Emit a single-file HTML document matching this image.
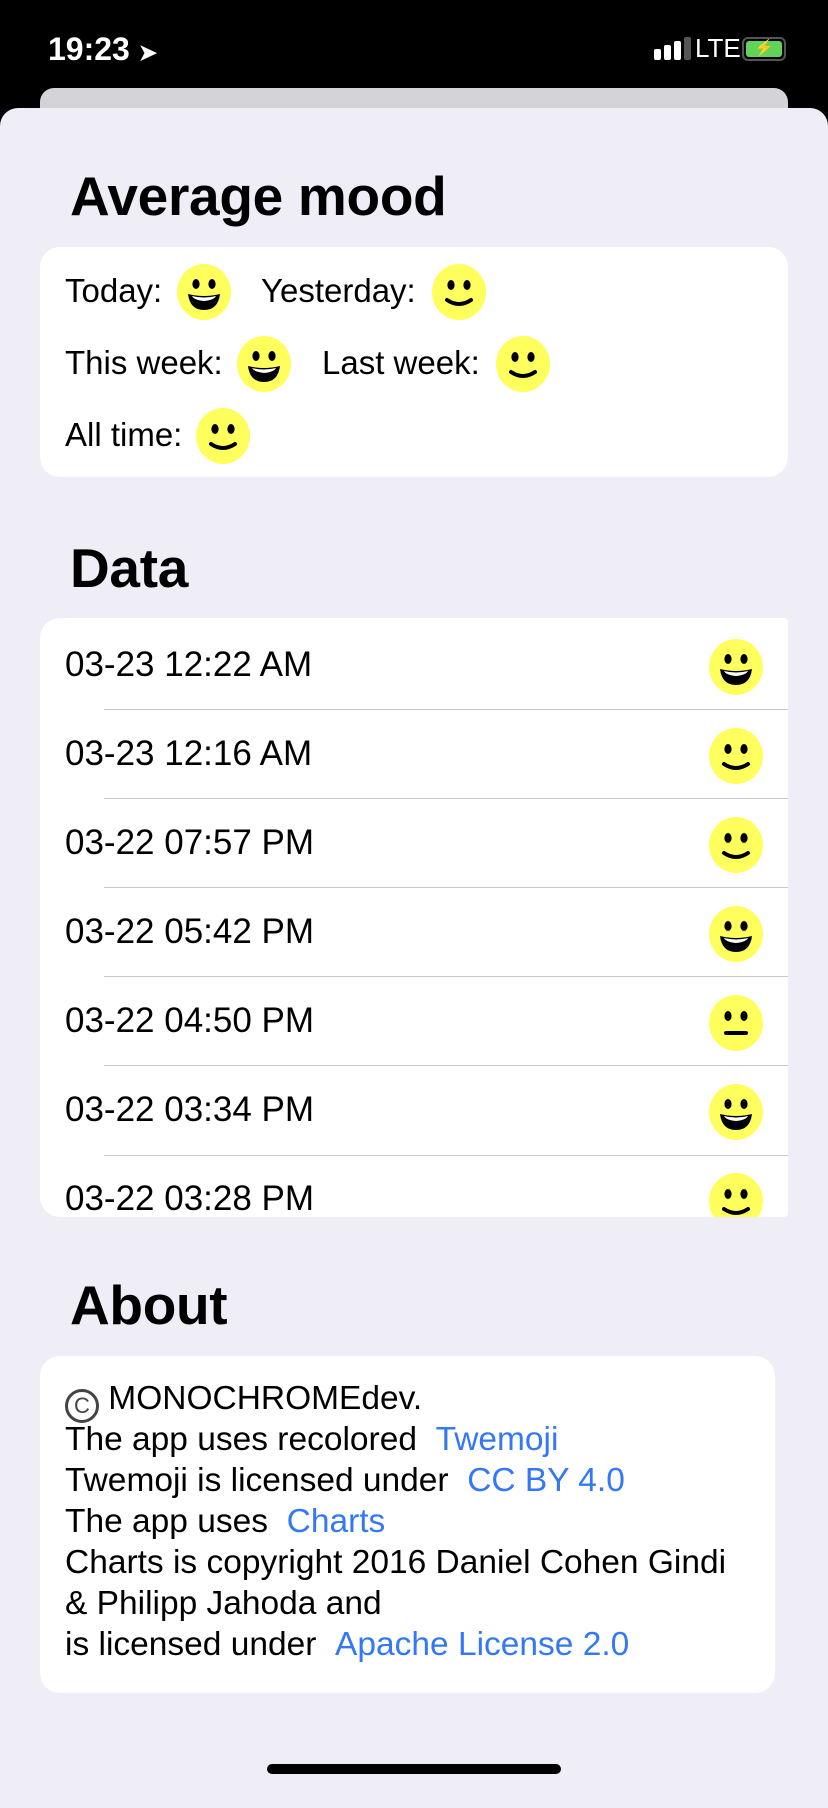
<!DOCTYPE html>
<html><head><meta charset="utf-8">
<style>
*{margin:0;padding:0;box-sizing:border-box}
body{width:828px;height:1792px;background:#000;position:relative;overflow:hidden;font-family:"Liberation Sans",sans-serif;color:#000}
.abs{position:absolute}
.sheet{left:0;top:108px;width:828px;height:1700px;background:#efeef6;border-radius:18px 18px 0 0}
.back{left:40px;top:88px;width:748px;height:40px;background:#d3d3d8;border-radius:14px}
.title{font-weight:bold;font-size:55px;left:70px;letter-spacing:-0.3px}
.card{background:#fff;border-radius:20px}
.t{font-size:33px;position:absolute;white-space:nowrap}
.d{font-size:35px;position:absolute;white-space:nowrap}
.e{position:absolute;width:54px;height:56px}
.sep{position:absolute;left:104px;width:684px;height:1px;background:#c8c8cc}
.blue{color:#3478f6}
.about div{font-size:33.5px;height:41px;line-height:41px;white-space:nowrap}
</style></head><body>
<svg width="0" height="0" style="position:absolute">
<defs>
<symbol id="grin" viewBox="0 0 54 56"><ellipse cx="27" cy="28" rx="27" ry="28" fill="#fefe5c"/><ellipse cx="19" cy="20" rx="3.6" ry="5" fill="#000"/><ellipse cx="35" cy="20" rx="3.6" ry="5" fill="#000"/><path d="M11 30 Q27 34 43 30 Q41 46 27 46 Q13 46 11 30Z" fill="#000"/><path d="M15 32 Q27 35 39 32 Q37 36 27 37 Q17 36 15 32Z" fill="#fff"/></symbol>
<symbol id="smile" viewBox="0 0 54 56"><ellipse cx="27" cy="28" rx="27" ry="28" fill="#fefe5c"/><ellipse cx="19" cy="21" rx="3.6" ry="5" fill="#000"/><ellipse cx="35" cy="21" rx="3.6" ry="5" fill="#000"/><path d="M15 36 Q27 44 39 36" stroke="#000" stroke-width="4" fill="none" stroke-linecap="round"/></symbol>
<symbol id="neutral" viewBox="0 0 54 56"><ellipse cx="27" cy="28" rx="27" ry="28" fill="#fefe5c"/><ellipse cx="19" cy="21" rx="3.6" ry="5" fill="#000"/><ellipse cx="35" cy="21" rx="3.6" ry="5" fill="#000"/><path d="M17 38 H37" stroke="#000" stroke-width="4" stroke-linecap="round"/></symbol>
</defs></svg>

<div class="abs" style="left:48px;top:31px;color:#fff;font-size:32px;font-weight:bold">19:23 <span style="font-size:22px">➤</span></div>
<div class="abs" style="left:654px;top:49px;width:7px;height:11px;background:#fff;border-radius:2px"></div>
<div class="abs" style="left:664px;top:45px;width:7px;height:15px;background:#fff;border-radius:2px"></div>
<div class="abs" style="left:674px;top:41px;width:7px;height:19px;background:#fff;border-radius:2px"></div>
<div class="abs" style="left:684px;top:37px;width:7px;height:23px;background:#555;border-radius:2px"></div>
<div class="abs" style="left:695px;top:33px;color:#fff;font-size:26px">LTE</div>
<div class="abs" style="left:742px;top:37px;width:44px;height:24px;border:2px solid #555;border-radius:6px;padding:2px"><div style="background:#5fd35a;width:100%;height:100%;border-radius:3px;color:#000;font-size:16px;text-align:center;line-height:16px">⚡</div></div>

<div class="abs back"></div>
<div class="abs sheet"></div>

<div class="abs title" style="top:164px">Average mood</div>
<div class="abs card" style="left:40px;top:247px;width:748px;height:230px"></div>
<div class="t" style="left:65px;top:272px">Today:</div><svg class="e" style="left:177px;top:264px"><use href="#grin"/></svg>
<div class="t" style="left:261px;top:272px">Yesterday:</div><svg class="e" style="left:432px;top:264px"><use href="#smile"/></svg>
<div class="t" style="left:65px;top:344px">This week:</div><svg class="e" style="left:237px;top:336px"><use href="#grin"/></svg>
<div class="t" style="left:322px;top:344px">Last week:</div><svg class="e" style="left:496px;top:336px"><use href="#smile"/></svg>
<div class="t" style="left:65px;top:416px">All time:</div><svg class="e" style="left:196px;top:408px"><use href="#smile"/></svg>

<div class="abs title" style="top:536px">Data</div>
<div class="abs card" style="left:40px;top:618px;width:748px;height:599px;border-radius:20px 4px 4px 20px"></div>
<div class="abs" style="left:40px;top:618px;width:748px;height:599px;overflow:hidden">
<div class="d" style="left:25px;top:27px">03-23 12:22 AM</div><svg class="e" style="left:669px;top:21px"><use href="#grin"/></svg>
<div class="sep" style="left:64px;top:91px"></div>
<div class="d" style="left:25px;top:116px">03-23 12:16 AM</div><svg class="e" style="left:669px;top:110px"><use href="#smile"/></svg>
<div class="sep" style="left:64px;top:180px"></div>
<div class="d" style="left:25px;top:205px">03-22 07:57 PM</div><svg class="e" style="left:669px;top:199px"><use href="#smile"/></svg>
<div class="sep" style="left:64px;top:269px"></div>
<div class="d" style="left:25px;top:294px">03-22 05:42 PM</div><svg class="e" style="left:669px;top:288px"><use href="#grin"/></svg>
<div class="sep" style="left:64px;top:358px"></div>
<div class="d" style="left:25px;top:383px">03-22 04:50 PM</div><svg class="e" style="left:669px;top:377px"><use href="#neutral"/></svg>
<div class="sep" style="left:64px;top:447px"></div>
<div class="d" style="left:25px;top:472px">03-22 03:34 PM</div><svg class="e" style="left:669px;top:466px"><use href="#grin"/></svg>
<div class="sep" style="left:64px;top:537px"></div>
<div class="d" style="left:25px;top:561px">03-22 03:28 PM</div><svg class="e" style="left:669px;top:555px"><use href="#smile"/></svg>
</div>

<div class="abs title" style="top:1273px">About</div>
<div class="abs card about" style="left:40px;top:1356px;width:735px;height:337px;padding:22px 0 0 25px">
<div><span style="display:inline-block;width:34px;height:34px;border:3px solid #444;border-radius:50%;font-size:22px;line-height:28px;text-align:center;vertical-align:-4px;color:#444">C</span> MONOCHROMEdev.</div>
<div>The app uses recolored &nbsp;<span class="blue">Twemoji</span></div>
<div>Twemoji is licensed under &nbsp;<span class="blue">CC BY 4.0</span></div>
<div>The app uses &nbsp;<span class="blue">Charts</span></div>
<div>Charts is copyright 2016 Daniel Cohen Gindi</div>
<div>&amp; Philipp Jahoda and</div>
<div>is licensed under &nbsp;<span class="blue">Apache License 2.0</span></div>
</div>

<div class="abs" style="left:267px;top:1764px;width:294px;height:10px;background:#000;border-radius:5px"></div>
</body></html>
